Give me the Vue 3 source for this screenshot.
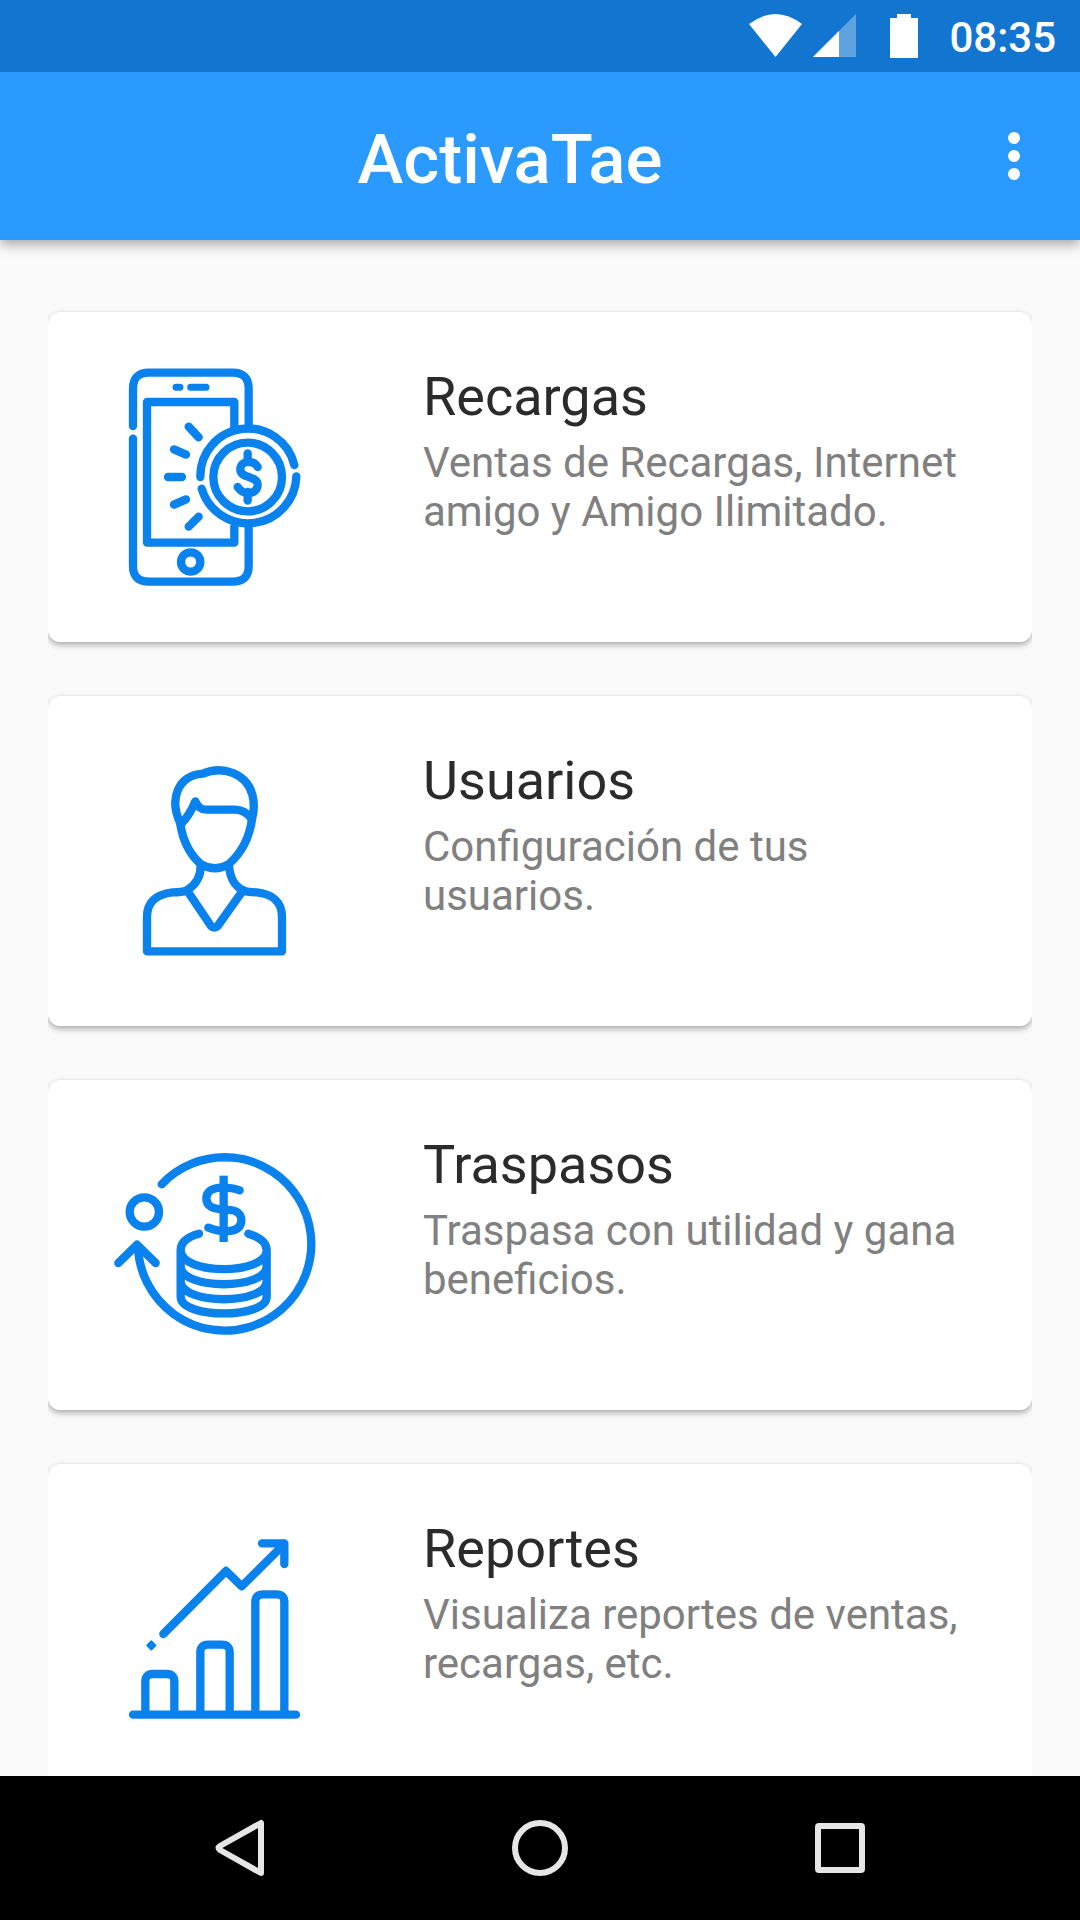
<script setup>
import { ref } from 'vue'

const time = ref('08:35')

const sections = [
  { id: 'recargas', title: 'Recargas', text: 'Ventas de Recargas, Internet amigo y Amigo Ilimitado.', viewBox: '0 -114 690 990' },
  { id: 'usuarios', title: 'Usuarios', text: 'Configuración de tus usuarios.', viewBox: '0 -132 690 990' },
  { id: 'traspasos', title: 'Traspasos', text: 'Traspasa con utilidad y gana beneficios.', viewBox: '0 -150 690 990' },
  { id: 'reportes', title: 'Reportes', text: 'Visualiza reportes de ventas, recargas, etc.', viewBox: '0 -168 690 990' },
]
</script>

<template>
  <div class="screen">
    <div class="status">
      <svg class="signals" viewBox="0 0 180 72" aria-hidden="true">
        <path d="M9 24Q35.500 4 62 24L35.500 57Z" />
        <path d="M116 14V57H73Z" opacity=".32" />
        <path d="M99 31V57H73Z" />
        <path d="M157 14h14v4h7v40h-28V18h7Z" />
      </svg>
      <time>{{ time }}</time>
    </div>

    <header class="toolbar">
      <h1>ActivaTae</h1>
      <button class="menu" type="button" aria-label="Más opciones">
        <svg viewBox="0 0 12 48">
          <circle cx="6" cy="6" r="6" /><circle cx="6" cy="24" r="6" /><circle cx="6" cy="42" r="6" />
        </svg>
      </button>
    </header>

    <main class="list">
      <div class="cards">
        <a v-for="s in sections" :key="s.id" class="card" :href="'#' + s.id">
          <svg class="icon" :viewBox="s.viewBox" aria-hidden="true">
            <template v-if="s.id === 'recargas'">
              <path d="M99 228V116Q99 68 147 68H398Q446 68 446 116V228M99 266V648Q99 695 147 695H398Q446 695 446 648V532" />
              <path d="M228 112H240M272 112H318" class="thin" />
              <path d="M403 232V156H141V578H403V530" />
              <circle cx="272" cy="636" r="29" />
              <path d="M266 230L296 262M222 298L258 314M204 381H246M222 464L258 448M266 530L296 500" />
              <path d="M301 381A143 143 0 0 1 583 345M589 379A145 145 0 0 1 305 416" />
              <circle cx="443" cy="381" r="103" />
              <path d="M443 310V336M443 426V452M473 351C460 329 423 331 421 356C419 388 474 375 473 405C471 434 431 438 413 411" />
            </template>
            <template v-else-if="s.id === 'usuarios'">
              <path d="M240 248C207 176 234 107 308 101C366 76 439 99 457 164C463 187 463 212 456 238C448 294 426 337 387 372Q345 398 302 372C265 340 248 301 240 248Z" />
              <path d="M245 250Q269 225 286 184Q297 209 318 209H405Q434 209 453 235" />
              <path d="M302 376C303 407 290 432 261 451M387 376C389 411 404 439 429 451" />
              <path d="M261 451Q246 457 217 457C163 463 141 491 141 530V634H546V530C546 486 516 461 470 457Q444 457 429 451L353 558Q343 568 333 558Z" />
            </template>
            <template v-else-if="s.id === 'traspasos'">
              <path d="M185 163A260 260 0 1 1 114 350" />
              <path d="M55 399L111 344L167 399" />
              <circle cx="133" cy="246" r="44" />
              <path d="M371 137V336" class="flat" />
              <path d="M419 181Q398 173 365 173C337 173 319 185 319 205C319 233 342 235 371 239C402 238 424 245 424 272C422 309 370 310 325 293" />
              <path d="M297 311C256 322 242 341 242 361V500C242 567 500 567 500 500V361C500 341 484 323 445 311M242 361C242 436 500 436 500 361M242 408C242 481 500 481 500 408M242 453C242 526 500 526 500 453" />
            </template>
            <template v-else>
              <path d="M99 584H588M136 580V485Q136 462 159 462H200Q223 462 223 485V580M301 580V397Q301 374 324 374H366Q389 374 389 397V580M466 580V245Q466 223 489 223H530Q553 223 553 245V580" />
              <path d="M190 342L378 153L425 199L548 77M486 70H553V132" />
              <path d="M154 365L165 376L154 387L143 376Z" class="dot" />
            </template>
          </svg>
          <div class="copy">
            <h2>{{ s.title }}</h2>
            <p>{{ s.text }}</p>
          </div>
        </a>
      </div>
    </main>

    <nav class="navbar" aria-label="Sistema">
      <button type="button" aria-label="Atrás">
        <svg viewBox="0 0 60 60"><path d="M51 5V55L10 32Q7 30 10 28Z" /></svg>
      </button>
      <button type="button" aria-label="Inicio">
        <svg viewBox="0 0 60 60"><circle cx="30" cy="30" r="25" /></svg>
      </button>
      <button type="button" aria-label="Recientes">
        <svg viewBox="0 0 60 60"><rect x="8" y="8" width="44" height="44" rx="1" /></svg>
      </button>
    </nav>
  </div>
</template>

<style>
body {
  margin: 0;
}
</style>

<style scoped>
.screen {
  display: flex;
  flex-direction: column;
  height: 100vh;
  background: #fafafa;
  font-family: Roboto, "Noto Sans", sans-serif;
}
button {
  display: flex;
  align-items: center;
  justify-content: center;
  padding: 0;
  border: 0;
  background: none;
}
h1,
h2,
p {
  margin: 0;
}
.status {
  position: relative;
  z-index: 2;
  display: flex;
  flex: none;
  align-items: center;
  justify-content: flex-end;
  gap: 29px;
  height: 72px;
  padding-right: 24px;
  background: #1276d0;
  color: #fff;
}
.status time {
  padding-top: 4px;
  font-size: 42px;
  font-weight: 500;
  line-height: 50px;
}
.signals {
  width: 180px;
  height: 72px;
  fill: #fff;
}
.toolbar {
  position: relative;
  z-index: 1;
  display: flex;
  flex: none;
  align-items: center;
  height: 168px;
  padding-left: 72px;
  background: #2a9aff;
  box-shadow: 0 4px 12px rgba(0, 0, 0, 0.35);
  color: #fff;
}
.toolbar h1 {
  flex: 1;
  padding-top: 8px;
  font-size: 69px;
  font-weight: 500;
  line-height: 80px;
  text-align: center;
}
.menu {
  width: 132px;
  height: 132px;
}
.menu svg {
  width: 12px;
  height: 48px;
  fill: #fff;
}
.list {
  flex: 1;
  min-height: 0;
  padding: 0 48px;
  overflow: hidden;
}
.cards {
  display: flex;
  flex-direction: column;
  gap: 54px;
  padding: 72px 0;
  overflow: hidden;
}
.card {
  display: flex;
  gap: 93px;
  padding: 0 60px 0 52px;
  border-radius: 12px;
  background: #fff;
  box-shadow: 0 3px 6px rgba(0, 0, 0, 0.3), 0 0 3px rgba(0, 0, 0, 0.06);
  text-decoration: none;
}
.icon {
  flex: none;
  width: 230px;
  height: 330px;
  fill: none;
  stroke: #0a82ee;
  stroke-width: 25;
  stroke-linecap: round;
  stroke-linejoin: round;
}
.icon .thin {
  stroke-width: 21;
}
.icon .flat {
  stroke-linecap: butt;
}
.icon .dot {
  fill: #0a82ee;
  stroke-width: 8;
}
.copy {
  display: flex;
  flex: 1;
  flex-direction: column;
  gap: 10px;
  padding-top: 53px;
}
.copy h2 {
  color: #2b2b2b;
  font-size: 54px;
  font-weight: 400;
  line-height: 63px;
}
.copy p {
  color: #808080;
  font-size: 42px;
  line-height: 49px;
}
.navbar {
  display: flex;
  flex: none;
  height: 144px;
  padding: 0 90px;
  background: #000;
}
.navbar button {
  flex: 1;
}
.navbar svg {
  width: 60px;
  height: 60px;
  fill: none;
  stroke: #e6e6e6;
  stroke-width: 6;
  stroke-linejoin: round;
}
</style>
